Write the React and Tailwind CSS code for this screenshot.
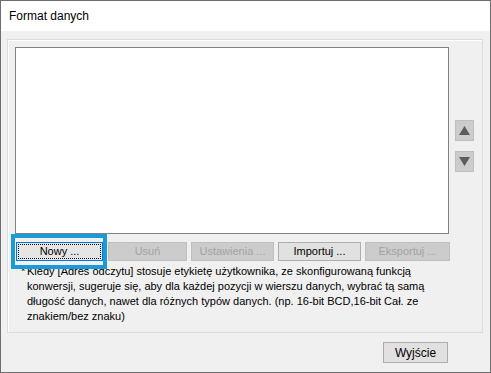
const btnBase =
  "flex h-[19px] items-center justify-center border text-[11px] leading-none";

function Btn({ label, width, disabled }) {
  return (
    <div
      className={[
        btnBase,
        width,
        disabled
          ? "border-[#bfbfbf] bg-[#cccccc] text-[#a3a3a3]"
          : "border-[#adadad] bg-[#e1e1e1] text-black",
      ].join(" ")}
    >
      {label}
    </div>
  );
}

function ArrowBtn({ up }) {
  return (
    <div className="flex h-[21px] w-[19px] items-center justify-center border border-[#bfbfbf] bg-[#cccccc]">
      <svg width="11" height="9" viewBox="0 0 11 9">
        {up ? (
          <polygon points="5.5,0 11,9 0,9" fill="#5c5c5c" />
        ) : (
          <polygon points="0,0 11,0 5.5,9" fill="#5c5c5c" />
        )}
      </svg>
    </div>
  );
}

export default function App() {
  return (
    <div
      className="flex h-[373px] w-[491px] flex-col border border-[#6e6e6e] bg-[#f0f0f0]"
      style={{ fontFamily: '"Liberation Sans", Arial, sans-serif' }}
    >
      <div className="flex h-[30px] items-center bg-white pl-[8px] text-[12px] text-black">
        Format danych
      </div>

      <div className="px-[6px] pt-[8px]">
        <div className="h-[294px] w-[476px] border border-[#dcdcdc] shadow-[inset_1px_1px_0_#ffffff]">
          <div className="flex pl-[7px] pt-[7px]">
            <div className="h-[187px] w-[434px] border border-[#828282] bg-white" />
            <div className="ml-[6px] flex flex-col gap-[10px] pt-[73px]">
              <ArrowBtn up />
              <ArrowBtn />
            </div>
          </div>

          <div className="mt-[8px] flex pl-[8px]">
            <div className="relative">
              <div className="flex h-[19px] w-[87px] items-center justify-center border border-[#0078d7] bg-[#e5e5e5] text-[11px] leading-none text-black">
                <div className="flex h-[15px] w-[83px] items-center justify-center border border-dotted border-black">
                  Nowy ...
                </div>
              </div>
              <div className="pointer-events-none absolute left-[-5px] top-[-8px] h-[35px] w-[96px] border-[4px] border-[#1a9ad6]" />
            </div>
            <div className="ml-[5px] flex gap-[4px]">
              <Btn label="Usuń" width="w-[79px]" disabled />
              <Btn label="Ustawienia ..." width="w-[83px]" disabled />
              <Btn label="Importuj ..." width="w-[83px]" />
              <Btn label="Eksportuj ..." width="w-[85px]" disabled />
            </div>
          </div>

          <div className="mt-[3px] flex pl-[13px] pr-[20px] text-[11px] leading-[15px] text-black">
            <span className="w-[6px] shrink-0">*</span>
            <p>
              Kiedy [Adres odczytu] stosuje etykietę użytkownika, ze skonfigurowaną funkcją
              konwersji, sugeruje się, aby dla każdej pozycji w wierszu danych, wybrać tą samą
              długość danych, nawet dla różnych typów danych. (np. 16-bit BCD,16-bit Cał. ze
              znakiem/bez znaku)
            </p>
          </div>
        </div>
      </div>

      <div className="flex justify-end pr-[42px] pt-[9px]">
        <div className="flex h-[21px] w-[65px] items-center justify-center border border-[#adadad] bg-[#e1e1e1] text-[12px] text-black">
          Wyjście
        </div>
      </div>
    </div>
  );
}
